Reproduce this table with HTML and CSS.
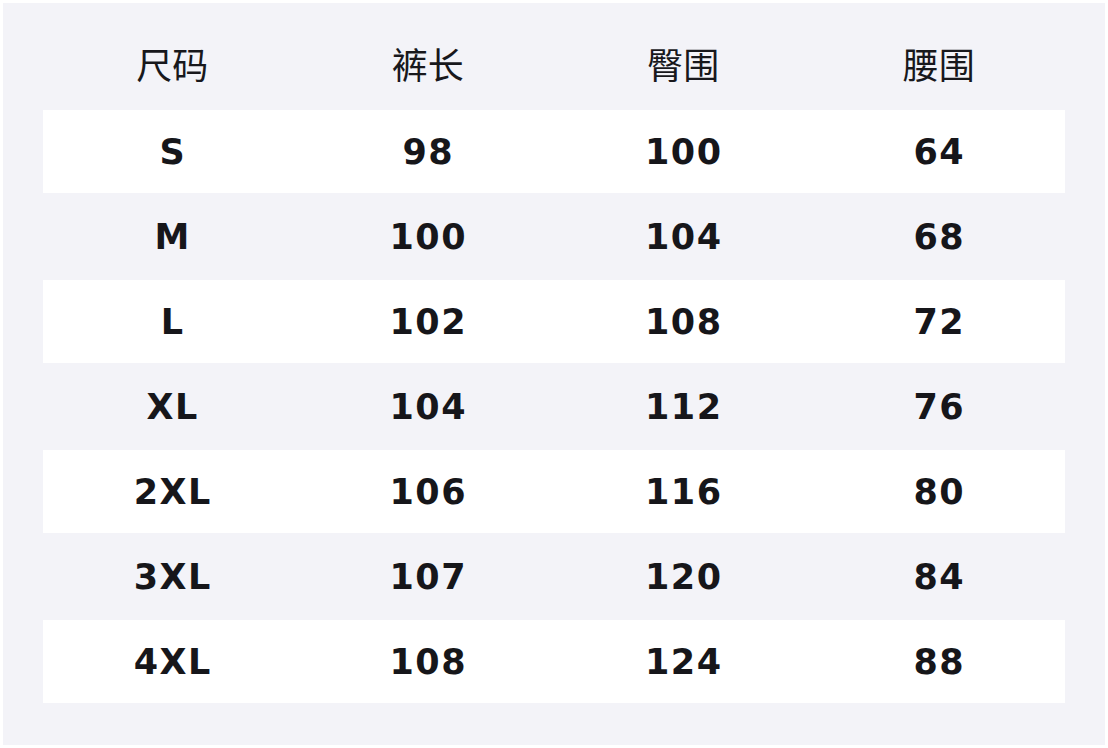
FILE: index.html
```html
<!DOCTYPE html>
<html lang="zh">
<head>
<meta charset="utf-8">
<link rel="stylesheet" href="styles.css">
</head>
<body>
<div class="panel">
  <table class="size-table">
    <thead>
      <tr><th>尺码</th><th>裤长</th><th>臀围</th><th>腰围</th></tr>
    </thead>
    <tbody>
      <tr><td>S</td><td>98</td><td>100</td><td>64</td></tr>
      <tr><td>M</td><td>100</td><td>104</td><td>68</td></tr>
      <tr><td>L</td><td>102</td><td>108</td><td>72</td></tr>
      <tr><td>XL</td><td>104</td><td>112</td><td>76</td></tr>
      <tr><td>2XL</td><td>106</td><td>116</td><td>80</td></tr>
      <tr><td>3XL</td><td>107</td><td>120</td><td>84</td></tr>
      <tr><td>4XL</td><td>108</td><td>124</td><td>88</td></tr>
    </tbody>
  </table>
</div>
</body>
</html>
```

FILE: styles.css
```css
html, body {
  margin: 0;
  padding: 0;
  background: #ffffff;
}
body {
  padding: 3px;
  width: 1102px;
  height: 742px;
}
.panel {
  background: #f3f3f8;
  width: 1102px;
  height: 742px;
  box-sizing: border-box;
  padding: 18px 40px 0 40px;
}
.size-table {
  width: 1022px;
  border-collapse: separate;
  border-spacing: 0 2px;
  table-layout: fixed;
}
.size-table th {
  height: 85px;
  padding: 0 0 6px 3px;
  box-sizing: border-box;
  font-family: "Noto Sans CJK SC", "DejaVu Sans", sans-serif;
  font-weight: 400;
  font-size: 36px;
  color: #18181c;
  text-align: center;
  vertical-align: middle;
}
.size-table td {
  height: 83px;
  padding: 0 0 0 4px;
  font-family: "DejaVu Sans", sans-serif;
  font-weight: 700;
  font-size: 35px;
  letter-spacing: 1.5px;
  color: #16161a;
  text-align: center;
  vertical-align: middle;
}
.size-table tbody tr:nth-child(odd) td {
  background: #ffffff;
}
```
